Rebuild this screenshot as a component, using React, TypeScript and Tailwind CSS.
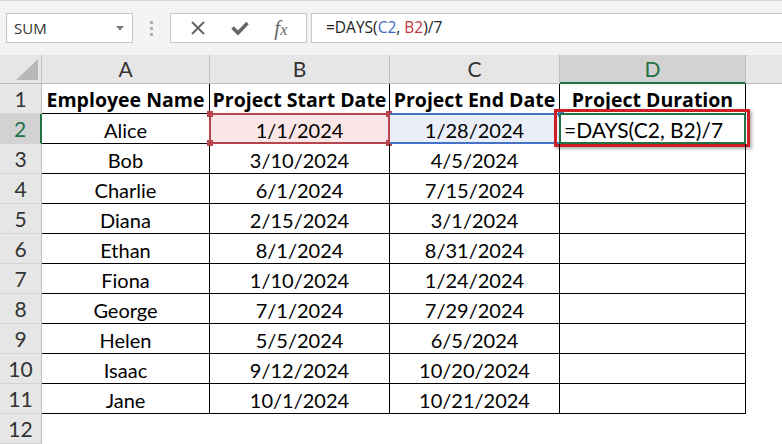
import React from 'react';

const rows: [string, string, string][] = [
  ['Alice', '1/1/2024', '1/28/2024'],
  ['Bob', '3/10/2024', '4/5/2024'],
  ['Charlie', '6/1/2024', '7/15/2024'],
  ['Diana', '2/15/2024', '3/1/2024'],
  ['Ethan', '8/1/2024', '8/31/2024'],
  ['Fiona', '1/10/2024', '1/24/2024'],
  ['George', '7/1/2024', '7/29/2024'],
  ['Helen', '5/5/2024', '6/5/2024'],
  ['Isaac', '9/12/2024', '10/20/2024'],
  ['Jane', '10/1/2024', '10/21/2024'],
];

function Toolbar() {
  return (
    <div className="h-[55px] shrink-0 bg-[#f3f3f3] border-t border-[#d6d6d6] flex items-start pt-[12px] pl-[6px] font-['Open_Sans',sans-serif]">
      {/* Name box */}
      <div className="w-[127px] h-[30px] bg-white border border-[#c6c6c6] flex items-center justify-between pl-[7px] pr-[8px]">
        <span className="text-[15px] text-[#333]">SUM</span>
        <svg width="8" height="5" viewBox="0 0 8 5">
          <polygon points="0,0 8,0 4,4.5" fill="#7a7a7a" />
        </svg>
      </div>
      {/* Grip */}
      <div className="w-[37px] h-[30px] flex flex-col items-center justify-center gap-[3px]">
        <span className="w-[3px] h-[3px] bg-[#b0b0b0]" />
        <span className="w-[3px] h-[3px] bg-[#b0b0b0]" />
        <span className="w-[3px] h-[3px] bg-[#b0b0b0]" />
      </div>
      {/* Cancel / Enter / fx */}
      <div className="w-[137px] h-[30px] bg-white border border-[#c6c6c6] flex items-center justify-around px-[6px]">
        <svg width="16" height="16" viewBox="0 0 16 16">
          <path d="M2 2 L14 14 M14 2 L2 14" stroke="#666" strokeWidth="2" />
        </svg>
        <svg width="18" height="16" viewBox="0 0 18 16">
          <path d="M1.5 7.5 L7 13 L16.5 3" stroke="#666" strokeWidth="3.4" fill="none" />
        </svg>
        <span className="font-['Liberation_Serif',serif] italic text-[21px] text-[#666] leading-none">
          f<span className="text-[16px]">x</span>
        </span>
      </div>
      {/* Formula */}
      <div className="ml-[4px] flex-1 h-[30px] bg-white border border-[#c6c6c6] border-r-0 flex items-center pl-[14px]">
        <span className="text-[15.5px] text-[#222]">
          =DAYS(<span className="text-[#3a6cc0]">C2</span>, <span className="text-[#c0393f]">B2</span>)/7
        </span>
      </div>
    </div>
  );
}

const widths = ['w-[168px]', 'w-[180px]', 'w-[170px]', 'w-[186px]'];

function ColumnHeaders() {
  const letters = ['A', 'B', 'C', 'D'];
  return (
    <div className="flex h-[29px] bg-[#e6e6e6]">
      <div className="w-[42px] shrink-0 border-r border-b border-[#bdbdbd] flex items-end justify-end pr-[3px] pb-[3px]">
        <svg width="22" height="21" viewBox="0 0 22 21">
          <polygon points="22,0 22,21 0,21" fill="#b8b8b8" />
        </svg>
      </div>
      {letters.map((l, i) =>
        l === 'D' ? (
          <div
            key={l}
            className={`${widths[i]} shrink-0 bg-[#d2d2d2] border-r border-[#bdbdbd] border-b-2 border-b-[#217346] flex items-center justify-center text-[#217346] text-[21px]`}
          >
            {l}
          </div>
        ) : (
          <div
            key={l}
            className={`${widths[i]} shrink-0 border-r border-b border-[#bdbdbd] flex items-center justify-center text-[#333] text-[21px]`}
          >
            {l}
          </div>
        )
      )}
      <div className="flex-1 border-b border-[#bdbdbd]" />
    </div>
  );
}

function RowHeader({ n, active }: { n: number; active?: boolean }) {
  return active ? (
    <div className="w-[42px] shrink-0 bg-[#d2d2d2] border-b border-[#d2d2d2] border-r-2 border-r-[#217346] flex items-center justify-center text-[21px] text-[#217346]">
      {n}
    </div>
  ) : (
    <div className="w-[42px] shrink-0 bg-[#e6e6e6] border-b border-[#d4d4d4] border-r border-r-[#bdbdbd] flex items-center justify-center text-[21px] text-[#333]">
      {n}
    </div>
  );
}

export default function App() {
  return (
    <div className="w-[782px] h-[444px] overflow-hidden bg-white flex flex-col font-['Lato',sans-serif] text-black">
      <Toolbar />
      <ColumnHeaders />
      {/* Row 1: headings */}
      <div className="flex h-[30px]">
        <RowHeader n={1} />
        {['Employee Name', 'Project Start Date', 'Project End Date', 'Project Duration'].map((t, i) => (
          <div
            key={t}
            className={`${widths[i]} shrink-0 border-r border-b border-black flex items-center justify-center pt-[3px] font-['Open_Sans',sans-serif] font-bold text-[19.5px] whitespace-nowrap`}
          >
            {t}
          </div>
        ))}
      </div>
      {rows.map(([name, start, end], r) => {
        const active = r === 0;
        return (
          <div key={name} className="flex h-[30px]">
            <RowHeader n={r + 2} active={active} />
            <div className={`${widths[0]} shrink-0 border-r border-b border-black flex items-center justify-center pt-[2px] text-[20px]`}>
              {name}
            </div>
            <div
              className={`${widths[1]} shrink-0 border-r border-b border-black flex items-center justify-center pt-[2px] text-[20px] relative ${active ? 'bg-[#fbe6e7]' : ''}`}
            >
              {start}
              {active && (
                <div className="absolute left-[-1px] top-[-1px] right-[-1px] bottom-[-1px] border-2 border-[#b6454e]">
                  <span className="absolute left-[-4px] top-[-4px] w-[6px] h-[6px] bg-[#b6454e]" />
                  <span className="absolute right-[-4px] top-[-4px] w-[6px] h-[6px] bg-[#b6454e]" />
                  <span className="absolute left-[-4px] bottom-[-4px] w-[6px] h-[6px] bg-[#b6454e]" />
                  <span className="absolute right-[-4px] bottom-[-4px] w-[6px] h-[6px] bg-[#b6454e]" />
                </div>
              )}
            </div>
            <div
              className={`${widths[2]} shrink-0 border-r border-b border-black flex items-center justify-center pt-[2px] text-[20px] relative ${active ? 'bg-[#e9eef8]' : ''}`}
            >
              {end}
              {active && (
                <div className="absolute left-0 top-[-1px] right-[-1px] bottom-[-1px] border-y-2 border-[#4472c4]">
                  <span className="absolute right-[-4px] top-[-4px] w-[6px] h-[6px] bg-[#4472c4]" />
                </div>
              )}
            </div>
            <div className={`${widths[3]} shrink-0 border-r border-b border-black flex items-center text-[20px] relative`}>
              {active && (
                <>
                  <div className="absolute left-[-6px] top-[-5px] right-[-5px] bottom-[-4px] border-[3px] border-[#cf1f26] shadow-[2px_2px_3px_rgba(0,0,0,0.3)]" />
                  <div className="absolute left-[-1px] top-[-1px] right-[-1px] bottom-[-1px] border-2 border-[#217346] flex items-center pl-[3px] pt-[2px] bg-white text-[21px]">
                    =DAYS(C2, B2)/7
                  </div>
                </>
              )}
            </div>
            <div className="flex-1" />
          </div>
        );
      })}
      <div className="flex h-[30px]">
        <RowHeader n={12} />
        <div className="flex-1" />
      </div>
    </div>
  );
}
